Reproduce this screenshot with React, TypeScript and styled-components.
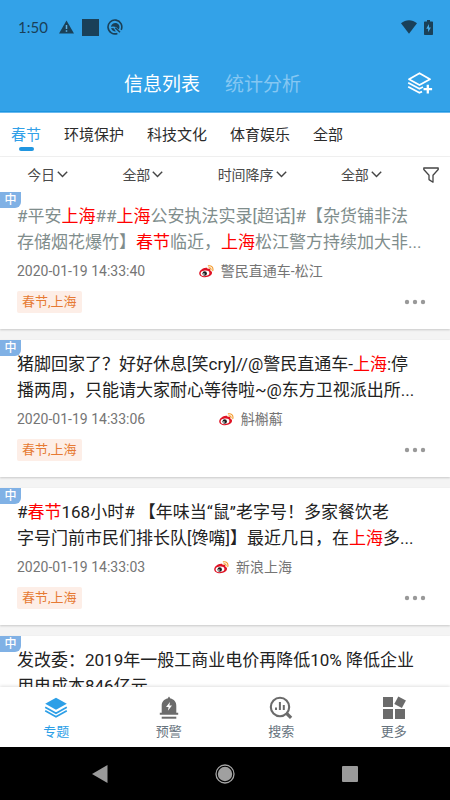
import React from "react";
import styled, { createGlobalStyle } from "styled-components";

const GlobalStyle = createGlobalStyle`
  *, *::before, *::after { box-sizing: border-box; }
  body {
    margin: 0;
    background: #f4f4f4;
    font-family: Roboto, "Noto Sans CJK SC", sans-serif;
    color: #222;
  }
  button, select {
    margin: 0;
    padding: 0;
    border: 0;
    background: none;
    color: inherit;
    font: inherit;
    cursor: pointer;
  }
  svg { display: block; flex: none; }
`;

const Screen = styled.div`
  display: flex;
  flex-direction: column;
  height: 100vh;
  overflow: hidden;
`;

const Header = styled.header`
  flex: none;
  background: #33a2e8;
  border-bottom: 1px solid #69b9ef;
  box-shadow: inset 0 -1px 0 #1b95e0;
`;

const StatusBar = styled.div`
  display: flex;
  align-items: center;
  justify-content: space-between;
  height: 54px;
  padding: 0 17px 0 18px;
  color: #1a4058;
  font-family: Lato, Roboto, sans-serif;
  font-size: 15px;
  line-height: 20px;
`;

const StatusGroup = styled.div<{ $gap: number }>`
  display: flex;
  align-items: center;
  gap: ${(p) => p.$gap}px;
`;

const Clock = styled.span`
  margin-right: 3px;
`;

const TitleBar = styled.div`
  display: flex;
  align-items: center;
  height: 58px;
  padding: 0 17px 0 18px;
  color: #fff;
`;

const Views = styled.nav`
  display: flex;
  flex: 1;
  justify-content: center;
  gap: 25px;
`;

const ViewTab = styled.button<{ $active?: boolean }>`
  padding-top: 3px;
  font-size: 19px;
  line-height: 26px;
  color: ${(p) => (p.$active ? "#fff" : "#85c7f2")};
`;

const TopicTabs = styled.nav`
  display: flex;
  flex: none;
  gap: 23px;
  height: 44px;
  padding-left: 11px;
  background: #fff;
  border-bottom: 1px solid #f2f2f2;
`;

const TopicTab = styled.button<{ $active?: boolean }>`
  display: flex;
  flex-direction: column;
  align-items: center;
  gap: 1px;
  padding-top: 11px;
  font-size: 15px;
  line-height: 22px;
  white-space: nowrap;
  color: ${(p) => (p.$active ? "#31a0e8" : "#2b2b2b")};

  &::after {
    content: "";
    width: 15px;
    height: 4px;
    border-radius: 2px;
    background: ${(p) => (p.$active ? "#2196e0" : "transparent")};
  }
`;

const FilterBar = styled.div`
  display: flex;
  flex: none;
  align-items: center;
  height: 35px;
  background: #fff;
  color: #4a4a4a;
  box-shadow: 0 1px 2px rgba(0, 0, 0, 0.16);
  position: relative;
`;

const Filters = styled.div`
  display: flex;
  flex: 1;
  justify-content: space-around;
  padding-right: 2px;
`;

const FilterLabel = styled.label`
  display: flex;
  align-items: center;
  gap: 2px;
`;

const FilterSelect = styled.select`
  appearance: none;
  outline: none;
  font-size: 14px;
  line-height: 20px;
`;

const FunnelButton = styled.button`
  display: flex;
  justify-content: center;
  width: 39px;
`;

const List = styled.main`
  display: flex;
  flex: 1;
  flex-direction: column;
  gap: 11px;
  min-height: 0;
  overflow: hidden;
`;

const Card = styled.article`
  position: relative;
  flex: none;
  padding: 11px 16px 16px 17px;
  background: #fff;
  box-shadow: 0 1px 2px rgba(0, 0, 0, 0.18);
`;

const LanguageFlag = styled.span`
  position: absolute;
  top: 0;
  left: 0;
  width: 21px;
  height: 16px;
  border-bottom-right-radius: 6px;
  background: #80b1e5;
  color: #fff;
  font-size: 12px;
  font-weight: 500;
  line-height: 16px;
  text-align: center;
`;

const Headline = styled.h2<{ $read?: boolean }>`
  margin: 0;
  font-size: 17px;
  font-weight: 400;
  line-height: 26px;
  white-space: nowrap;
  color: ${(p) => (p.$read ? "#7f8d8c" : "#222")};
`;

const Keyword = styled.em`
  font-style: normal;
  color: #ff0000;
`;

const Meta = styled.div`
  display: flex;
  align-items: center;
  margin-top: 6px;
  padding-right: 4px;
  color: #757575;
  font-size: 14px;
  line-height: 20px;
`;

const Source = styled.span`
  display: flex;
  flex: 1;
  align-items: center;

  &::before { content: ""; flex: 1; }
  &::after { content: ""; flex: 2; }
`;

const SourceName = styled.span`
  margin-left: 7px;
`;

const CardFooter = styled.div`
  display: flex;
  align-items: center;
  justify-content: space-between;
  margin-top: 10px;
  padding-right: 8px;
`;

const Tag = styled.span`
  padding: 0 5px;
  border-radius: 2px;
  background: #fdeee7;
  color: #e67a33;
  font-size: 13px;
  line-height: 22px;
`;

const BottomNav = styled.nav`
  display: grid;
  grid-template-columns: repeat(4, 1fr);
  flex: none;
  height: 60px;
  background: #fff;
  box-shadow: 0 -1px 3px rgba(0, 0, 0, 0.12);
  position: relative;
`;

const NavItem = styled.button<{ $active?: boolean }>`
  display: flex;
  flex-direction: column;
  align-items: center;
  gap: 3px;
  padding-top: 9px;
  color: ${(p) => (p.$active ? "#2d9fe7" : "#6b6b6b")};
`;

const NavLabel = styled.span<{ $active?: boolean }>`
  font-size: 13px;
  line-height: 18px;
  color: ${(p) => (p.$active ? "#2d9fe7" : "#66737d")};
`;

const SystemBar = styled.footer`
  display: flex;
  flex: none;
  align-items: center;
  justify-content: space-between;
  height: 53px;
  padding: 0 88px;
  background: #000;
`;

const SystemKey = styled.button`
  display: flex;
  justify-content: center;
  width: 24px;
`;

const WarningIcon = () => (
  <svg width="15" height="14" viewBox="0 0 15 14">
    <path d="M7.5 0.4 15 13.6H0Z" fill="#1a4058" />
    <path d="M7.5 5v4M7.5 10.2v1.6" stroke="#5fb4ea" strokeWidth="1.5" />
  </svg>
);

const SquareIcon = () => (
  <svg width="17" height="17" viewBox="0 0 17 17">
    <path d="M0 0h17v17H0z" fill="#1a4058" />
  </svg>
);

const CircleBadgeIcon = () => (
  <svg width="16" height="16" viewBox="0 0 16 16" fill="none" stroke="#1a4058">
    <path d="M10.4 14.4A6.9 6.9 0 1 1 14.2 10.8" strokeWidth="1.6" />
    <path d="M3.900 7.800C4.500 4 8.900 2.700 11.400 5.300c1.500 1.600 1.300 4 .3 5.200L9 7.900 6.200 7.400Z" fill="#1a4058" stroke="none" />
    <path d="M4.100 9c.5 2.300 2.400 3.700 4.800 3.500L6.700 9.300Z" fill="#1a4058" stroke="none" />
    <path d="m8.200 8.700 4.800 4.600" strokeWidth="1.500" />
  </svg>
);

const WifiIcon = () => (
  <svg width="16" height="14" viewBox="0 0 16 14">
    <path d="M0 3.300C4.800-.9 11.200-.9 16 3.300L8 13.700Z" fill="#1a4058" />
  </svg>
);

const BatteryIcon = () => (
  <svg width="9" height="15" viewBox="0 0 9 15">
    <path d="M3 0h3v1.400h2.200q.8 0 .8.800v12q0 .8-.8.800H.8q-.8 0-.8-.8v-12q0-.8.8-.8H3Z" fill="#1a4058" />
    <path d="M5 4 2.200 8.800h1.900V12.300L6.900 7.500H5Z" fill="#45abe9" />
  </svg>
);

const AddLayerIcon = () => (
  <svg width="26" height="22" viewBox="0 0 26 22" fill="none" stroke="#fff" strokeWidth="1.800" strokeLinejoin="round">
    <path d="M12.500 1.200 23 7.200 12.500 13 2 7.200Z" />
    <path d="m1.200 10.800 11.200 6 3.600-1.800M1.200 14.800l11.200 6 2.600-1.200" />
    <path d="M20.800 12.800v8.600M16.500 17.100h8.600" strokeWidth="2.300" />
  </svg>
);

const ChevronIcon = () => (
  <svg width="11" height="7" viewBox="0 0 11 7" fill="none" stroke="#444" strokeWidth="1.400">
    <path d="m.8.8 4.700 4.800L10.200.8" />
  </svg>
);

const FunnelIcon = () => (
  <svg width="16" height="16" viewBox="0 0 16 16" fill="none" stroke="#444" strokeWidth="1.300" strokeLinejoin="round">
    <path d="M.8 1h14.400v1.500L10 8.300v6.900L6 12.600V8.300L.8 2.500Z" />
  </svg>
);

const WeiboIcon = () => (
  <svg width="15" height="13" viewBox="0 0 15 13">
    <path d="M6 3.100c1.500-.8 2.800-.5 2.600.9 1.800-.5 3 .1 2.600 1.400 2.500.9 2.300 3.500.2 5.200-2.600 2.100-7.300 2.300-9.700.5C-.6 9.300-.1 6.600 2.200 4.700 3.500 3.500 5.400 2.400 5.900 3.100Z" fill="#df1224" />
    <ellipse cx="6" cy="8.300" rx="4.400" ry="2.800" fill="#fff" transform="rotate(-6 6 8.300)" />
    <circle cx="5.700" cy="8.500" r="2.200" fill="#1c1c1c" />
    <circle cx="4.900" cy="9.100" r=".8" fill="#fff" />
    <path d="M9.300.9c3.200-.6 5.300 1.800 4.500 4.700M10 2.900c1.500-.2 2.300.7 2 2" fill="none" stroke="#f49a2c" strokeWidth="1.100" strokeLinecap="round" />
  </svg>
);

const MoreDotsIcon = () => (
  <svg width="22" height="6" viewBox="0 0 22 6" fill="#999">
    <circle cx="3" cy="3" r="2.200" />
    <circle cx="11" cy="3" r="2.200" />
    <circle cx="19" cy="3" r="2.200" />
  </svg>
);

const LayersIcon = () => (
  <svg width="24" height="24" viewBox="0 0 24 24">
    <path d="M12 1.800 22.800 7.800 12 13.800 1.200 7.800Z" fill="currentColor" />
    <path d="m1.200 11.200 10.800 6 10.800-6M1.200 14.800l10.800 6 10.800-6" fill="none" stroke="currentColor" strokeWidth="1.700" />
  </svg>
);

const AlarmIcon = () => (
  <svg width="24" height="24" viewBox="0 0 24 24" fill="currentColor">
    <path d="M12 .4 13.400 2.600c3.700.7 5.900 3.500 5.900 7.200V16.700h1.900v2H2.800v-2h1.900V9.800C4.700 6.100 6.900 3.300 10.600 2.600Z" />
    <path d="M4.700 20.700h14.600v2H4.700Z" />
    <path d="m13 6-4 5h2.600l-.7 3.800 4.100-5.300h-2.600Z" fill="#fff" />
  </svg>
);

const SearchChartIcon = () => (
  <svg width="24" height="24" viewBox="0 0 24 24" fill="none" stroke="currentColor">
    <circle cx="11" cy="11" r="9.200" strokeWidth="2.100" />
    <path d="M7 11.500V14M10.900 6v8M14.800 9v5" strokeWidth="2" />
    <path d="m17.200 17 4.900 4.900" strokeWidth="3.200" />
  </svg>
);

const BlocksIcon = () => (
  <svg width="24" height="24" viewBox="0 0 24 24" fill="currentColor">
    <path d="M1 1h10v10H1zM1 13h10v10H1zM13 13h10v10H13z" />
    <path d="M13.800 2h8.600v8.600h-8.600z" transform="rotate(28 18.100 6.300)" />
  </svg>
);

const BackKeyIcon = () => (
  <svg width="16" height="20" viewBox="0 0 16 20">
    <path d="M0 10 15.500 1v18Z" fill="#9a9a9a" />
  </svg>
);

const HomeKeyIcon = () => (
  <svg width="20" height="20" viewBox="0 0 20 20">
    <circle cx="10" cy="10" r="9" fill="none" stroke="#a5a5a5" strokeWidth="1.300" />
    <circle cx="10" cy="10" r="7.200" fill="#a0a0a0" />
  </svg>
);

const RecentKeyIcon = () => (
  <svg width="18" height="18" viewBox="0 0 18 18">
    <rect x="1" y="1" width="16" height="16" rx="1" fill="#9a9a9a" />
  </svg>
);

const K = Keyword;

const posts = [
  {
    id: 1,
    read: true,
    title: (
      <>
        #平安<K>上海</K>##<K>上海</K>公安执法实录[超话]#【杂货铺非法
        <br />
        存储烟花爆竹】<K>春节</K>临近，<K>上海</K>松江警方持续加大非...
      </>
    ),
    time: "2020-01-19 14:33:40",
    source: "警民直通车-松江",
  },
  {
    id: 2,
    read: false,
    title: (
      <>
        猪脚回家了？好好休息[笑cry]//@警民直通车-<K>上海</K>:停
        <br />
        播两周，只能请大家耐心等待啦~@东方卫视派出所...
      </>
    ),
    time: "2020-01-19 14:33:06",
    source: "斛槲蔛",
  },
  {
    id: 3,
    read: false,
    title: (
      <>
        #<K>春节</K>168小时# 【年味当“鼠”老字号！多家餐饮老
        <br />
        字号门前市民们排长队[馋嘴]】最近几日，在<K>上海</K>多...
      </>
    ),
    time: "2020-01-19 14:33:03",
    source: "新浪上海",
  },
  {
    id: 4,
    read: false,
    title: (
      <>
        发改委：2019年一般工商业电价再降低10% 降低企业
        <br />
        用电成本846亿元
      </>
    ),
  },
];

const topics = ["春节", "环境保护", "科技文化", "体育娱乐", "全部"];

const filters = [
  { name: "日期", value: "今日" },
  { name: "类型", value: "全部" },
  { name: "排序", value: "时间降序" },
  { name: "范围", value: "全部" },
];

const navItems = [
  { label: "专题", Icon: LayersIcon },
  { label: "预警", Icon: AlarmIcon },
  { label: "搜索", Icon: SearchChartIcon },
  { label: "更多", Icon: BlocksIcon },
];

export default function App() {
  return (
    <>
      <GlobalStyle />
      <Screen>
        <Header>
          <StatusBar>
            <StatusGroup $gap={8}>
              <Clock>1:50</Clock>
              <WarningIcon />
              <SquareIcon />
              <CircleBadgeIcon />
            </StatusGroup>
            <StatusGroup $gap={7}>
              <WifiIcon />
              <BatteryIcon />
            </StatusGroup>
          </StatusBar>
          <TitleBar>
            <Views>
              <ViewTab $active>信息列表</ViewTab>
              <ViewTab>统计分析</ViewTab>
            </Views>
            <button aria-label="添加专题">
              <AddLayerIcon />
            </button>
          </TitleBar>
        </Header>

        <TopicTabs>
          {topics.map((topic, i) => (
            <TopicTab key={topic} $active={i === 0}>
              {topic}
            </TopicTab>
          ))}
        </TopicTabs>

        <FilterBar>
          <Filters>
            {filters.map((f) => (
              <FilterLabel key={f.name}>
                <FilterSelect aria-label={f.name} defaultValue={f.value}>
                  <option>{f.value}</option>
                </FilterSelect>
                <ChevronIcon />
              </FilterLabel>
            ))}
          </Filters>
          <FunnelButton aria-label="筛选">
            <FunnelIcon />
          </FunnelButton>
        </FilterBar>

        <List>
          {posts.map((post) => (
            <Card key={post.id}>
              <LanguageFlag>中</LanguageFlag>
              <Headline $read={post.read}>{post.title}</Headline>
              {post.time && (
                <>
                  <Meta>
                    <time>{post.time}</time>
                    <Source>
                      <WeiboIcon />
                      <SourceName>{post.source}</SourceName>
                    </Source>
                  </Meta>
                  <CardFooter>
                    <Tag>春节,上海</Tag>
                    <button aria-label="更多操作">
                      <MoreDotsIcon />
                    </button>
                  </CardFooter>
                </>
              )}
            </Card>
          ))}
        </List>

        <BottomNav>
          {navItems.map(({ label, Icon }, i) => (
            <NavItem key={label} $active={i === 0}>
              <Icon />
              <NavLabel $active={i === 0}>{label}</NavLabel>
            </NavItem>
          ))}
        </BottomNav>

        <SystemBar>
          <SystemKey aria-label="返回">
            <BackKeyIcon />
          </SystemKey>
          <SystemKey aria-label="主屏幕">
            <HomeKeyIcon />
          </SystemKey>
          <SystemKey aria-label="最近任务">
            <RecentKeyIcon />
          </SystemKey>
        </SystemBar>
      </Screen>
    </>
  );
}
